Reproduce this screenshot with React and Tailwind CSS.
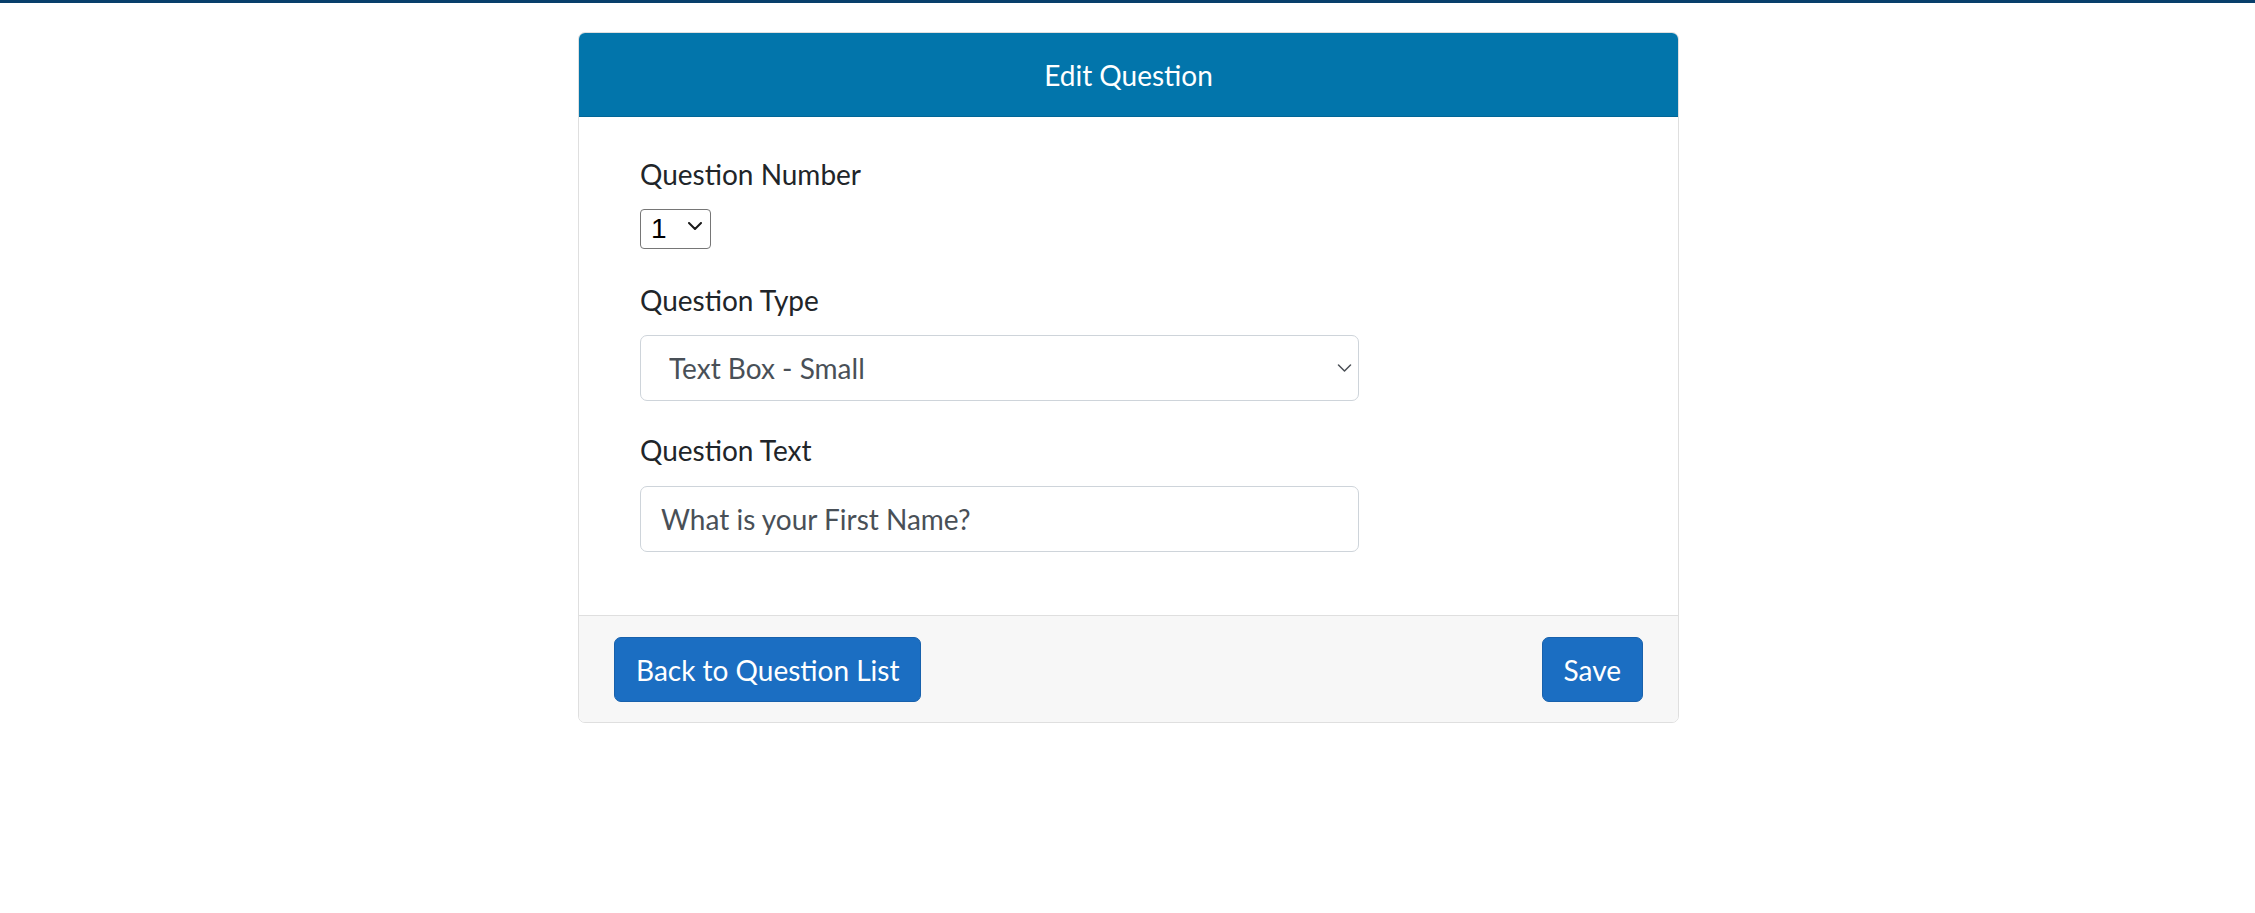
import React from "react";

const Chevron = ({ className, width = "1.5" }) => (
  <svg
    xmlns="http://www.w3.org/2000/svg"
    viewBox="0 0 14 8"
    fill="none"
    stroke="currentColor"
    strokeWidth={width}
    strokeLinecap="round"
    strokeLinejoin="round"
    className={className}
  >
    <path d="M1 1l6 6 6-6" />
  </svg>
);

const App = () => {
  return (
    <div className="min-h-screen bg-white font-['Lato',sans-serif] text-[28px] text-[#212529]">
      {/* top strip */}
      <div className="h-[3px] bg-[#083f6b]" />

      <div className="pt-[29px] pl-[2px]">
        <div className="mx-auto w-[1101px] rounded-[7px] border border-[#dfdfdf] overflow-hidden">
          {/* Header */}
          <div className="h-[84px] flex items-center justify-center bg-[#0275ab] border-b border-[#026696] text-white leading-[42px]">
            Edit Question
          </div>

          {/* Body */}
          <div className="pt-[36px] pb-[63px] px-[61px] bg-white">
            <label className="block leading-[42px] mb-[11px]">Question Number</label>
            <div className="relative w-[71px] h-[40px]">
              <select
                defaultValue="1"
                className="appearance-none w-full h-full border border-[#767676] rounded-[4px] bg-white pl-[10px] text-[28px] leading-none text-black font-['Liberation_Sans',sans-serif] focus:outline-none"
              >
                <option value="1">1</option>
                <option value="2">2</option>
                <option value="3">3</option>
              </select>
              <Chevron width="2" className="pointer-events-none absolute right-[9px] top-[16px] w-[14px] h-[8px] text-[#1a1a1a]" />
            </div>

            <label className="block leading-[42px] mt-[33px] mb-[14px]">Question Type</label>
            <div className="relative w-[719px] h-[66px]">
              <select
                defaultValue="small"
                className="appearance-none w-full h-full border border-[#ced4da] rounded-[7px] bg-white pl-[28px] text-[28px] text-[#495057] focus:outline-none"
              >
                <option value="small">Text Box - Small</option>
                <option value="large">Text Box - Large</option>
              </select>
              <Chevron className="pointer-events-none absolute right-[7px] top-[29px] w-[15px] h-[8px] text-[#4a4f55]" />
            </div>

            <label className="block leading-[42px] mt-[28px] mb-[15px]">Question Text</label>
            <input
              type="text"
              defaultValue="What is your First Name?"
              className="block w-[719px] h-[66px] border border-[#ced4da] rounded-[7px] bg-white px-[20px] text-[28px] text-[#495057] focus:outline-none"
            />
          </div>

          {/* Footer */}
          <div className="flex items-center justify-between border-t border-[#dfdfdf] bg-[#f7f7f7] px-[35px] pt-[21px] pb-[20px]">
            <button className="h-[65px] px-[21px] border border-[#1861ac] bg-[#1b6ec2] rounded-[7px] text-white leading-[42px]">
              Back to Question List
            </button>
            <button className="h-[65px] px-[21px] border border-[#1861ac] bg-[#1b6ec2] rounded-[7px] text-white leading-[42px]">
              Save
            </button>
          </div>
        </div>
      </div>
    </div>
  );
};

export default App;
